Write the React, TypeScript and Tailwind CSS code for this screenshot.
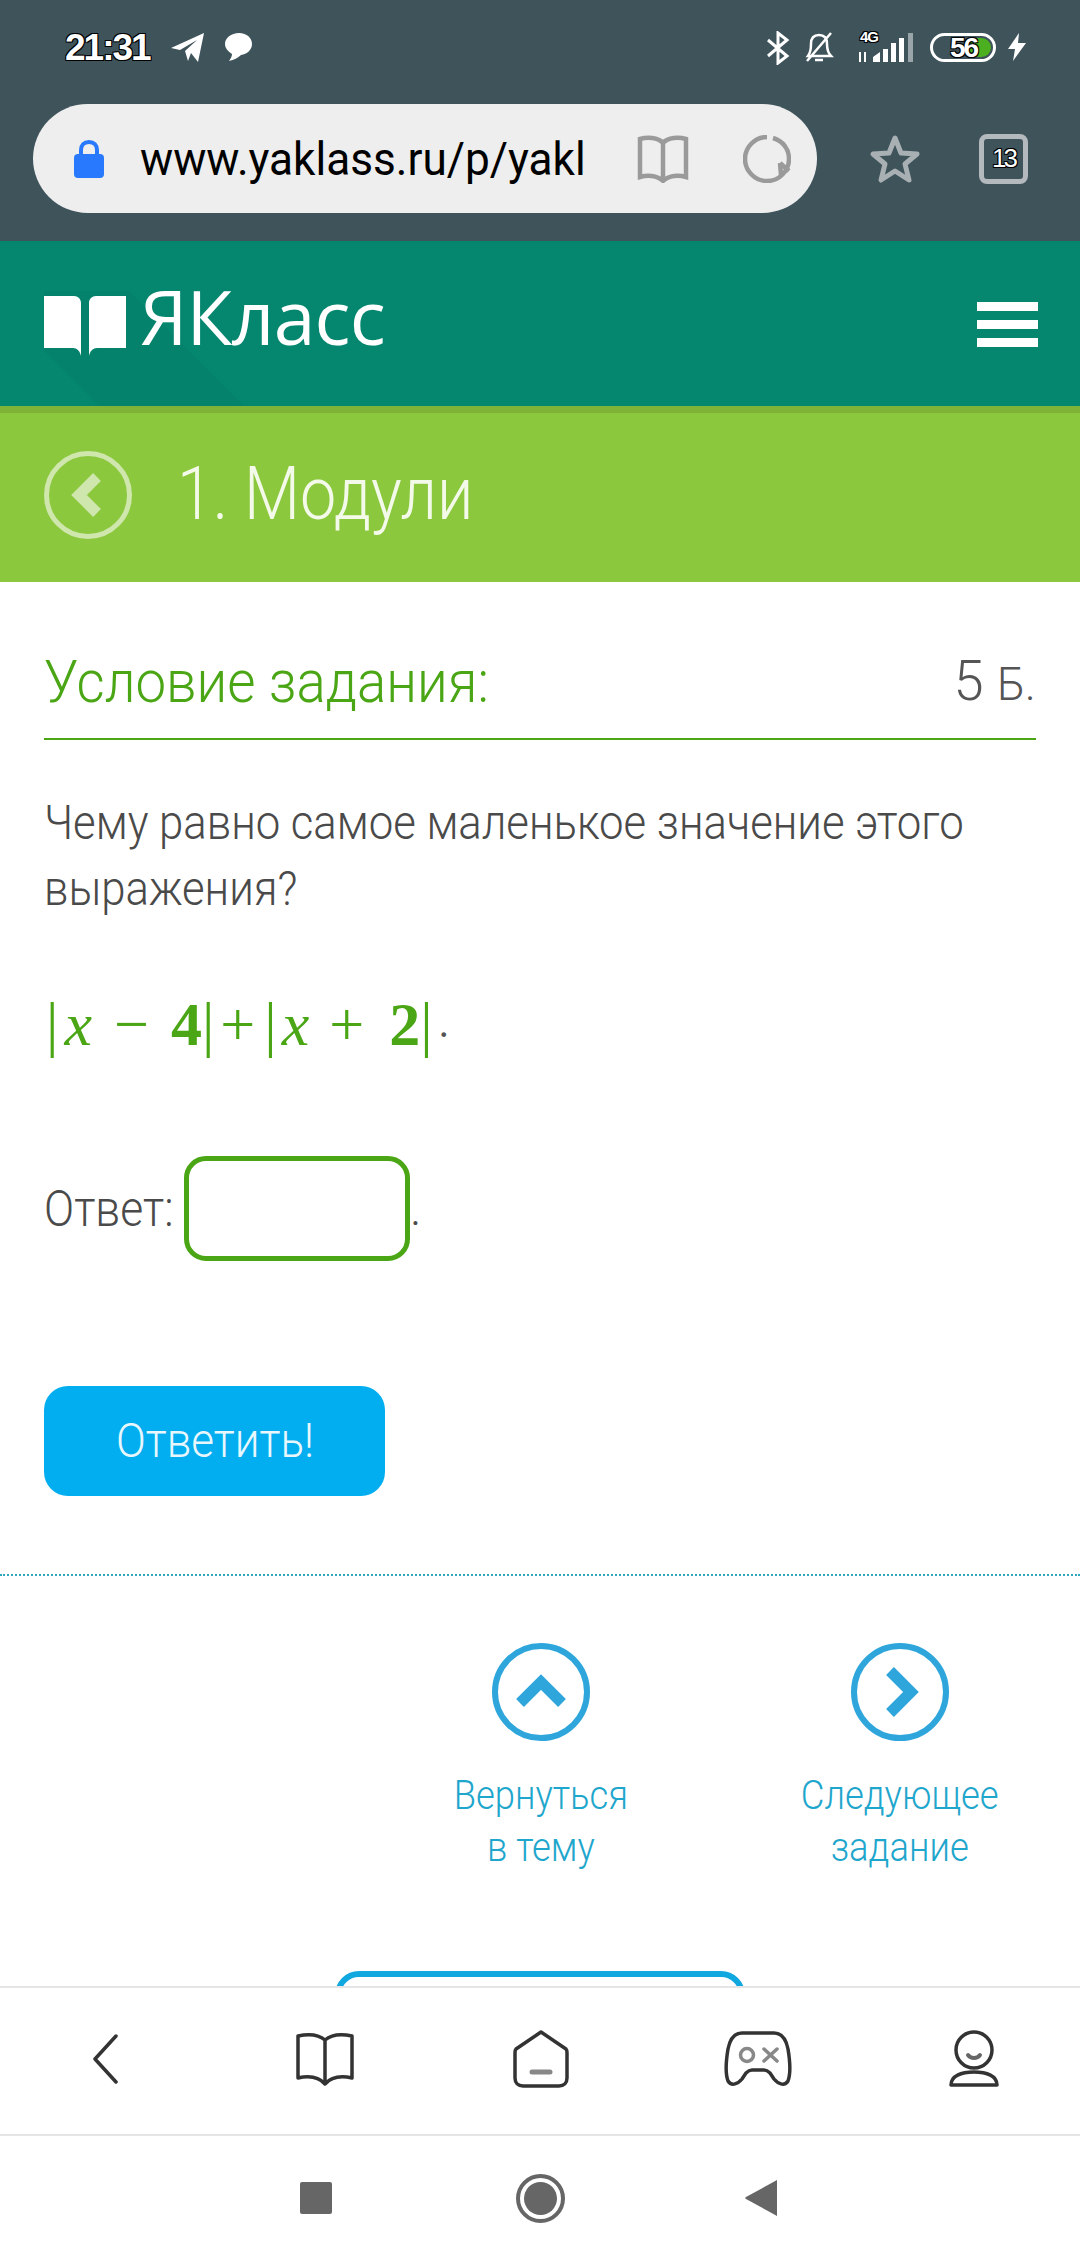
const roboto = "font-['Roboto',sans-serif]";
const outline = "[text-shadow:1px_1px_0_#000,-1px_-1px_0_#000,1px_-1px_0_#000,-1px_1px_0_#000]";

function StatusBar() {
  return (
    <div className="flex h-[104px] items-start pt-[30px] pl-[65px] pr-[54px]">
      <span className={`font-['Liberation_Sans',sans-serif] w-[86px] text-[37px] leading-[36px] font-bold whitespace-nowrap text-white tracking-[-2px] ${outline}`}>21:31</span>
      <svg className="ml-[20px] mt-[3px]" width="34" height="30" viewBox="0 0 34 30" fill="#fff"><path d="M0 15 33 0 27 29 20 20 17 28 14 18 26 7 9 17Z" /></svg>
      <svg className="ml-[19px] mt-[3px]" width="28" height="28" viewBox="0 0 28 28" fill="#fff"><path d="M15 0C23 0 28 5 28 11 28 17 23 21 17 22 14 25 10 27 5 28 7 25 8 23 8 21 3 18 1 14 1 11 1 5 7 0 15 0Z" /></svg>
      <div className="flex-1" />
      <svg className="mt-[1px]" width="24" height="34" viewBox="0 0 24 34" fill="none" stroke="#fff" strokeWidth="3"><path d="M2 9 21 25 12 32V2L21 9 2 25" /></svg>
      <svg className="ml-[13px] mt-[1px]" width="32" height="32" viewBox="0 0 32 32" fill="none" stroke="#fff" strokeWidth="2.5"><path d="M5 25C8 21 8 17 8 13 8 7 11 4 16 4 21 4 24 7 24 13 24 17 24 21 28 25H5ZM12 29H20M4 30 28 2" /></svg>
      <div className="relative ml-[22px] h-[34px] w-[57px]">
        <span className={`absolute left-[3px] top-0 font-['Liberation_Sans',sans-serif] text-[15px] leading-[14px] font-bold tracking-[-1px] text-white ${outline}`}>4G</span>
        <svg className="absolute left-0 top-[3px]" width="57" height="30" viewBox="0 0 57 30" fill="#fff"><path d="M2 19h2v10H2zM7 19h2v10H7zM16 24l7-5v10h-7zM26 16h5v13h-5zM34 10h5v19h-5zM42 5h5v24h-5z" /><path d="M51 0h5v29h-5z" fill="#9aa5aa" /></svg>
      </div>
      <div className="relative ml-[16px] mt-[3px] flex h-[29px] w-[66px] items-center rounded-full border-[3px] border-white">
        <div className="absolute right-[2px] top-[2px] h-[19px] w-[24px] rounded-r-full bg-[#4caf1f]" />
        <span className={`relative ml-[17px] font-['Liberation_Sans',sans-serif] text-[28px] leading-[24px] font-bold tracking-[-2px] text-white ${outline}`}>56</span>
      </div>
      <svg className="ml-[12px] mt-[3px]" width="18" height="28" viewBox="0 0 18 28" fill="#fff"><path d="M11 0 0 16H7L5 28 18 10H10Z" /></svg>
    </div>
  );
}

function BrowserBar() {
  return (
    <div className="flex items-center pl-[33px]">
      <div className="flex h-[109px] w-[784px] items-center rounded-full bg-[#eeeeee] pl-[41px]">
        <svg width="30" height="38" viewBox="0 0 30 38"><path d="M7 16V10C7 5 10 2 15 2 20 2 23 5 23 10V16" fill="none" stroke="#2979ff" strokeWidth="4" /><rect y="14" width="30" height="24" rx="4" fill="#2979ff" /></svg>
        <span className="ml-[36px] w-[445px] origin-left scale-x-[0.96] font-['Roboto',sans-serif] text-[46px] leading-[52px] whitespace-nowrap text-black">www.yaklass.ru/p/yakl</span>
        <svg className="ml-[52px]" width="52" height="48" viewBox="0 0 52 48" fill="none" stroke="#9a9a9a" strokeWidth="4.5"><path d="M26 8C21 2 10 2 3 4V42C10 40 20 40 26 46 32 40 42 40 49 42V4C42 2 31 2 26 8ZM26 8V46" /></svg>
        <svg className="ml-[54px]" width="48" height="48" viewBox="0 0 48 48" fill="none" stroke="#9a9a9a" strokeWidth="4.5"><path d="M30 3C40 6 46 14 46 24 46 36 36 46 24 46 12 46 2 36 2 24 2 12 12 2 24 2" /><path d="M38 40 37 28M37 28 46 36" /></svg>
      </div>
      <svg className="ml-[52px]" width="52" height="50" viewBox="0 0 52 50" fill="none" stroke="#a9b0b3" strokeWidth="5" strokeLinejoin="round"><path d="M26 4 32 19 48 20 36 30 40 46 26 37 12 46 16 30 4 20 20 19Z" /></svg>
      <div className="ml-[58px] flex h-[50px] w-[49px] items-center justify-center rounded-[8px] border-[5px] border-[#b3b9bc]">
        <span className={`font-['Liberation_Sans',sans-serif] text-[26px] tracking-[-3px] text-white ${outline}`}>13</span>
      </div>
    </div>
  );
}

function SiteHeader() {
  return (
    <div className="relative flex h-[165px] shrink-0 items-start justify-between overflow-hidden bg-[#05866f] pl-[44px] pr-[42px] pt-[55px]">
      <svg className="absolute left-[44px] top-[50px]" width="300" height="115" viewBox="0 0 300 115" fill="#047a68"><path d="M0 60 55 115H200L85 0H0Z" opacity="0.35" /></svg>
      <div className="relative flex items-start">
        <svg width="82" height="60" viewBox="0 0 82 60" fill="#fff"><path d="M0 0H30C34 0 37 3 37 7V60C36 55 33 52 29 52H0ZM82 0H52C48 0 45 3 45 7V60C46 55 49 52 53 52H82Z" /></svg>
        <span className="ml-[14px] -mt-[24px] font-['Open_Sans',sans-serif] text-[75px] leading-[88px] font-normal tracking-[-0.8px] text-white">ЯКласс</span>
      </div>
      <div className="relative mt-[6px] flex flex-col gap-[9px]">
        <div className="h-[9px] w-[61px] bg-white" />
        <div className="h-[9px] w-[61px] bg-white" />
        <div className="h-[9px] w-[61px] bg-white" />
      </div>
    </div>
  );
}

function SubHeader() {
  return (
    <div className="flex h-[176px] shrink-0 items-center border-t-[7px] border-[#7fb338] bg-[#8cc83e] pb-[6px] pl-[44px]">
      <svg width="88" height="88" viewBox="0 0 88 88" fill="none" stroke="#cfe6ac" ><circle cx="44" cy="44" r="41.5" strokeWidth="5" /><path d="M53 26 35 44 53 62" strokeWidth="11" /></svg>
      <span className={`${roboto} ml-[45px] mb-[2px] origin-left scale-x-[0.874] text-[74px] leading-[80px] font-light whitespace-nowrap text-[#f4fae9]`}>1. Модули</span>
    </div>
  );
}

function Task() {
  return (
    <div className="px-[44px] pt-[50px]">
      <div className="flex h-[108px] items-center justify-between border-b-[2px] border-[#4aa614] pb-[6px]">
        <span className={`${roboto} origin-left scale-x-[0.91] text-[60px] leading-[66px] font-light whitespace-nowrap text-[#4aa614]`}>Условие задания:</span>
        <span className={`${roboto} origin-right scale-x-[0.97] text-[56px] leading-[66px] font-light whitespace-nowrap text-[#555]`}>5 <span className="text-[46px]">Б.</span></span>
      </div>
      <p className={`${roboto} mt-[50px] w-[1090px] origin-left scale-x-[0.91] text-[48px] leading-[66px] font-light text-[#4a4a4a]`}>Чему равно самое маленькое значение этого<br />выражения?</p>
      <div className="mt-[67px] flex h-[70px] items-center font-['Liberation_Serif',serif] text-[62px] leading-[70px] whitespace-nowrap text-[#4aa614]">
        <span className="ml-[2px]">|</span>
        <span className="ml-[6px] italic">x</span>
        <span className="ml-[22px]">−</span>
        <span className="ml-[22px] font-bold">4</span>
        <span>|</span>
        <span className="ml-[6px]">+</span>
        <span className="ml-[9px]">|</span>
        <span className="ml-[5px] italic">x</span>
        <span className="ml-[20px]">+</span>
        <span className="ml-[25px] font-bold">2</span>
        <span>|</span>
        <span className="ml-[6px] self-end text-[40px] text-[#555]">.</span>
      </div>
      <div className="mt-[97px] flex items-center">
        <span className={`${roboto} w-[140px] origin-left scale-x-[0.89] text-[50px] leading-[60px] font-light whitespace-nowrap text-[#4a4a4a]`}>Ответ:</span>
        <div className="h-[105px] w-[226px] rounded-[22px] border-[5px] border-[#4aa614] bg-white" />
        <span className={`${roboto} text-[48px] leading-[60px] font-light text-[#4a4a4a]`}>.</span>
      </div>
      <div className={`${roboto} mt-[125px] flex h-[110px] w-[341px] items-center justify-center rounded-[24px] bg-[#02aeef] text-[#e8f7fd]`}>
        <span className="scale-x-[0.916] text-[48px] font-light">Ответить!</span>
      </div>
    </div>
  );
}

function NavLink({ lines, dir }: { lines: string[]; dir: "up" | "right" }) {
  return (
    <div className="flex w-[220px] flex-col items-center">
      <svg width="98" height="98" viewBox="0 0 98 98" fill="none" stroke="#2ea6dc">
        <circle cx="49" cy="49" r="46" strokeWidth="6" />
        <path d={dir === "up" ? "M28 60 49 39 70 60" : "M39 28 60 49 39 70"} strokeWidth="11" />
      </svg>
      <div className={`${roboto} mt-[29px] scale-x-[0.91] text-center text-[40px] leading-[52px] font-light text-[#1fa6cc]`}>
        {lines.map((l) => (<div key={l}>{l}</div>))}
      </div>
    </div>
  );
}

function BottomNav() {
  const s = { fill: "none", stroke: "#333", strokeWidth: 3.5, strokeLinecap: "round" as const, strokeLinejoin: "round" as const };
  return (
    <div className="flex h-[148px] shrink-0 items-center justify-between border-t-[2px] border-[#e5e5e5] bg-white pb-[4px]">
      <div className="flex w-full items-center">
        <svg className="ml-[92px]" width="26" height="50" viewBox="0 0 26 50" {...s}><path d="M24 2 3 25 24 48" /></svg>
        <svg className="ml-[178px]" width="58" height="56" viewBox="0 0 58 56" {...s}><path d="M29 9C22 3 11 3 2 5V47C11 45 22 45 29 53 36 45 47 45 56 47V5C47 3 36 3 29 9ZM29 9V53" /></svg>
        <svg className="ml-[159px]" width="56" height="58" viewBox="0 0 56 58" {...s}><path d="M28 2 3 19C2 20 2 21 2 23V48C2 53 5 56 10 56H46C51 56 54 53 54 48V23C54 21 54 20 53 19Z" /><path d="M19 42H37" stroke="#888" strokeWidth="5" /></svg>
        <svg className="ml-[155px]" width="68" height="56" viewBox="0 0 68 56" {...s}><path d="M18 2H50C58 2 62 8 64 18 66 30 67 42 64 50 61 55 55 54 50 48L46 42C44 40 42 39 40 39H28C26 39 24 40 22 42L18 48C13 54 7 55 4 50 1 42 2 30 4 18 6 8 10 2 18 2Z" /><circle cx="23" cy="24" r="6.5" stroke="#888" strokeWidth="3.5" /><path d="M40 18 53 30M53 18 40 30" stroke="#888" strokeWidth="3.5" /></svg>
        <svg className="ml-[156px]" width="52" height="58" viewBox="0 0 52 58" {...s}><ellipse cx="26" cy="20" rx="18" ry="18" /><path d="M20 25C23 29 29 29 32 25" stroke="#666" strokeWidth="4" /><path d="M3 55C3 46 13 42 26 42 39 42 49 46 49 55Z" /></svg>
      </div>
    </div>
  );
}

function SystemNav() {
  return (
    <div className="flex h-[130px] shrink-0 items-center border-t-[2px] border-[#e5e5e5] bg-white pb-[4px]">
      <div className="ml-[300px] h-[32px] w-[32px] rounded-[2px] bg-[#666]" />
      <div className="ml-[184px] flex h-[49px] w-[49px] items-center justify-center rounded-full border-[4px] border-[#666]">
        <div className="h-[33px] w-[33px] rounded-full bg-[#666]" />
      </div>
      <svg className="ml-[180px]" width="32" height="36" viewBox="0 0 32 36" fill="#666"><path d="M32 0V36L1 19C0 18 0 18 1 17Z" /></svg>
    </div>
  );
}

export default function App() {
  return (
    <div className="flex h-[2264px] w-[1080px] flex-col overflow-hidden bg-white">
      <div className="h-[241px] shrink-0 bg-[#3f535b]">
        <StatusBar />
        <BrowserBar />
      </div>
      <SiteHeader />
      <SubHeader />
      <div className="min-h-0 flex-1 overflow-hidden">
        <Task />
        <div className="mt-[78px] border-t-[2px] border-dotted border-[#2ea6bc]" />
        <div className="mt-[67px] flex pl-[431px]">
          <NavLink lines={["Вернуться", "в тему"]} dir="up" />
          <div className="ml-[139px]"><NavLink lines={["Следующее", "задание"]} dir="right" /></div>
        </div>
        <div className="ml-[335px] mt-[97px] h-[60px] w-[410px] rounded-[24px] border-[6px] border-[#10a8df]" />
      </div>
      <BottomNav />
      <SystemNav />
    </div>
  );
}
